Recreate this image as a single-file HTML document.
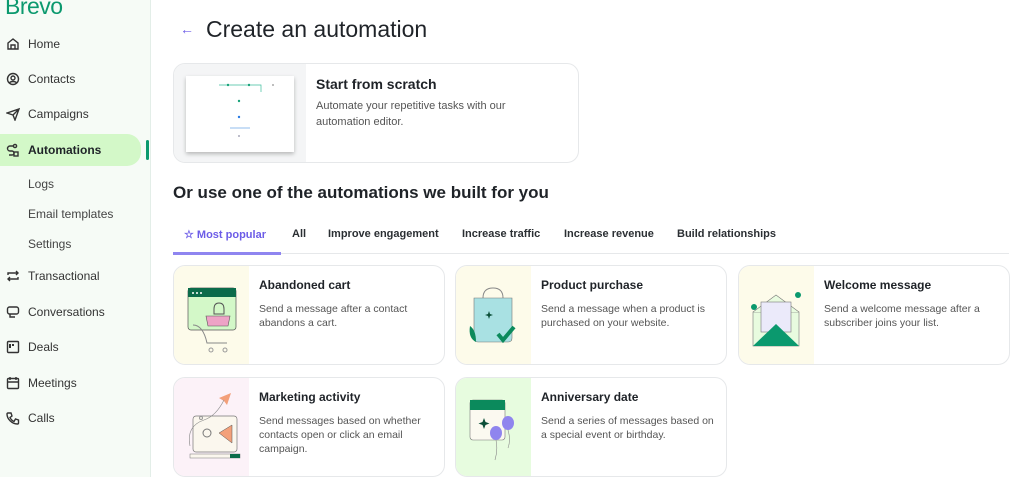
<!DOCTYPE html>
<html><head><meta charset="utf-8"><style>
*{box-sizing:border-box;margin:0;padding:0}
body{width:1024px;height:477px;overflow:hidden;font-family:"Liberation Sans",sans-serif;background:#fff;color:#1f2328;position:relative}
.sb{position:absolute;left:0;top:0;width:151px;height:477px;background:#f6fbf6;border-right:1px solid #e3eee8}
.logo{position:absolute;left:5px;top:-7px;font-size:23px;color:#0b996e;letter-spacing:-0.5px}
.nav{position:absolute;left:0;width:141px;height:32px;display:flex;align-items:center;font-size:12px;color:#333}
.nav svg{position:absolute;left:6px;width:14px;height:14px}
.nav span{position:absolute;left:28px}
.act{background:#d3f8c8;border-radius:0 14px 14px 0;font-weight:bold;color:#1f2328}
.bar{position:absolute;left:146px;top:140px;width:3px;height:20px;background:#0b996e;border-radius:2px}
.sub{position:absolute;left:28px;font-size:12px;color:#444}
.h1{position:absolute;left:206px;top:16px;font-size:23px;color:#1f2328}
.back{position:absolute;left:180px;top:21px;color:#6c5ce7;font-size:14px;font-weight:bold}
.card{position:absolute;border:1px solid #e6e8ea;border-radius:12px;overflow:hidden;background:#fff}
.card .img{position:absolute;left:0;top:0;bottom:0;width:75px}
.card h3{position:absolute;left:85px;top:12px;font-size:12px;font-weight:bold;color:#1f2328}
.card p{position:absolute;left:85px;top:36px;font-size:10.5px;line-height:14px;color:#555;width:180px}
.h2{position:absolute;left:173px;top:183px;font-size:17px;font-weight:bold;color:#1f2328}
.tab{position:absolute;top:228px;font-size:11px;font-weight:bold;color:#2b2f33}
</style></head><body>
<div class="sb">
<div class="logo">Brevo</div>
<div class="nav" style="top:28px"><svg viewBox="0 0 14 14" fill="none" stroke="#333" stroke-width="1.4"><path d="M2 6L7 2l5 4v6H2z M5 12V8h4v4"/></svg><span>Home</span></div>
<div class="nav" style="top:63px"><svg viewBox="0 0 14 14" fill="none" stroke="#333" stroke-width="1.4"><circle cx="7" cy="7" r="5.5"/><circle cx="7" cy="6" r="2"/><path d="M3.5 11c1-2 6-2 7 0"/></svg><span>Contacts</span></div>
<div class="nav" style="top:98px"><svg viewBox="0 0 14 14" fill="none" stroke="#333" stroke-width="1.4"><path d="M1 6l12-4-4 11-2-5z M7 8l6-6"/></svg><span>Campaigns</span></div>
<div class="nav act" style="top:134px"><svg viewBox="0 0 14 14" fill="none" stroke="#333" stroke-width="1.4"><circle cx="9" cy="3" r="1.6"/><rect x="8" y="9" width="4" height="4"/><path d="M7 3H4a2 2 0 0 0 0 5h2a2 2 0 0 1 0 4H3"/></svg><span>Automations</span></div>
<div class="bar"></div>
<div class="sub" style="top:177px">Logs</div>
<div class="sub" style="top:207px">Email templates</div>
<div class="sub" style="top:237px">Settings</div>
<div class="nav" style="top:260px"><svg viewBox="0 0 14 14" fill="none" stroke="#333" stroke-width="1.4"><path d="M2 6V4h10M10 2l2 2-2 2M12 8v2H2M4 12l-2-2 2-2"/></svg><span>Transactional</span></div>
<div class="nav" style="top:296px"><svg viewBox="0 0 14 14" fill="none" stroke="#333" stroke-width="1.4"><rect x="1.5" y="2" width="11" height="7" rx="2"/><path d="M4 9v3h5"/></svg><span>Conversations</span></div>
<div class="nav" style="top:331px"><svg viewBox="0 0 14 14" fill="none" stroke="#333" stroke-width="1.4"><rect x="1.5" y="1.5" width="11" height="11" rx="1"/><path d="M4 4v4M7 4v2" stroke-width="2"/></svg><span>Deals</span></div>
<div class="nav" style="top:367px"><svg viewBox="0 0 14 14" fill="none" stroke="#333" stroke-width="1.4"><rect x="1.5" y="2.5" width="11" height="10" rx="1"/><path d="M1.5 6h11M4 1v3M10 1v3"/></svg><span>Meetings</span></div>
<div class="nav" style="top:402px"><svg viewBox="0 0 14 14" fill="none" stroke="#333" stroke-width="1.4"><path d="M2 2h3l1 3-2 1.5a8 8 0 0 0 4 4L9.5 8l3 1v3a1 1 0 0 1-1 1C6 13 1 8 1 3a1 1 0 0 1 1-1z"/></svg><span>Calls</span></div>
</div>

<div class="back">&larr;</div>
<div class="h1">Create an automation</div>

<div class="card" style="left:173px;top:63px;width:406px;height:100px">
<div style="position:absolute;left:0;top:0;bottom:0;width:132px;background:#f4f5f6"></div>
<div style="position:absolute;left:12px;top:12px;width:108px;height:76px;background:#fff;box-shadow:0 2px 4px rgba(0,0,0,.25)">
<svg width="108" height="76" viewBox="0 0 108 76"><path d="M33 9h42v7" stroke="#3cbf9d" fill="none" stroke-width=".7"/><circle cx="42" cy="9" r="1.2" fill="#1aa37a"/><circle cx="63" cy="9" r="1.2" fill="#1aa37a"/><circle cx="87" cy="9" r="1" fill="#aaa"/><circle cx="53" cy="25" r="1.2" fill="#1aa37a"/><circle cx="53" cy="41" r="1.2" fill="#2a7be4"/><path d="M44 52h20" stroke="#6ea8e8" stroke-width=".8"/><circle cx="53" cy="60" r="1" fill="#aab"/></svg></div>
<div style="position:absolute;left:142px;top:12px;font-size:14px;font-weight:bold">Start from scratch</div>
<div style="position:absolute;left:142px;top:34px;font-size:11px;line-height:16px;color:#555;width:220px">Automate your repetitive tasks with our automation editor.</div>
</div>

<div class="h2">Or use one of the automations we built for you</div>
<div class="tab" style="left:184px;color:#6c5ce7">☆ Most popular</div>
<div class="tab" style="left:292px">All</div>
<div class="tab" style="left:328px">Improve engagement</div>
<div class="tab" style="left:462px">Increase traffic</div>
<div class="tab" style="left:564px">Increase revenue</div>
<div class="tab" style="left:677px">Build relationships</div>
<div style="position:absolute;left:173px;top:253px;width:836px;height:1px;background:#e6e8ea"></div>
<div style="position:absolute;left:173px;top:252px;width:108px;height:3px;background:#8f85f0"></div>

<div class="card" style="left:173px;top:265px;width:272px;height:100px"><div class="img" style="background:#fdfbea">
<svg width="75" height="100" viewBox="0 0 75 100"><rect x="14" y="22" width="48" height="42" rx="3" fill="#d3f8c8" stroke="#555" stroke-width=".7"/><rect x="14" y="22" width="48" height="9" fill="#0b6b4a"/><circle cx="19" cy="27" r="1" fill="#fff"/><circle cx="23" cy="27" r="1" fill="#fff"/><circle cx="27" cy="27" r="1" fill="#fff"/><path d="M40 43q0-6 5-6t5 6v5h-10z" fill="none" stroke="#555"/><path d="M32 50h24l-2 10H34z" fill="#eea3c6" stroke="#555" stroke-width=".6"/><circle cx="37" cy="84" r="2" fill="none" stroke="#999"/><circle cx="51" cy="84" r="2" fill="none" stroke="#999"/><path d="M19 59q10 0 14 18h20" fill="none" stroke="#888"/></svg></div>
<h3>Abandoned cart</h3><p>Send a message after a contact abandons a cart.</p></div>

<div class="card" style="left:455px;top:265px;width:272px;height:100px"><div class="img" style="background:#fdfbea">
<svg width="75" height="100" viewBox="0 0 75 100"><path d="M27 32q0-10 10-10t10 10" fill="none" stroke="#888"/><path d="M18 32h38v40q0 4-4 4H22q-4 0-4-4z" fill="#a9e1e3" stroke="#777" stroke-width=".6"/><path d="M42 68l5 6 11-13" stroke="#0b8a5c" stroke-width="4" fill="none"/><path d="M14 60q6 4 6 16q-8-4-6-16z" fill="#0b8a5c"/><path d="M33 45l1 3 3 1-3 1-1 3-1-3-3-1 3-1z" fill="#0b4f38"/></svg></div>
<h3>Product purchase</h3><p>Send a message when a product is purchased on your website.</p></div>

<div class="card" style="left:738px;top:265px;width:272px;height:100px"><div class="img" style="background:#fdfbea">
<svg width="75" height="100" viewBox="0 0 75 100"><rect x="14" y="46" width="46" height="34" fill="#e8fbdf" stroke="#777" stroke-width=".6"/><path d="M14 46l23-17 23 17" fill="#e8fbdf" stroke="#777" stroke-width=".6"/><rect x="22" y="36" width="30" height="30" fill="#ebeafa" stroke="#777" stroke-width=".6"/><path d="M14 80l23-22 23 22z" fill="#0b996e"/><circle cx="15" cy="41" r="3" fill="#0b996e"/><circle cx="59" cy="29" r="3" fill="#0b996e"/></svg></div>
<h3>Welcome message</h3><p>Send a welcome message after a subscriber joins your list.</p></div>

<div class="card" style="left:173px;top:377px;width:272px;height:100px"><div class="img" style="background:#fcf2f8">
<svg width="75" height="100" viewBox="0 0 75 100"><rect x="19" y="38" width="44" height="36" rx="3" fill="#fbf7ee" stroke="#777" stroke-width=".7"/><rect x="16" y="76" width="50" height="4" fill="#fbf7ee" stroke="#777" stroke-width=".5"/><rect x="56" y="76" width="10" height="4" fill="#0b6b4a"/><path d="M45 55l13-8v18z" fill="#f3a07a" stroke="#555" stroke-width=".5"/><circle cx="33" cy="55" r="4" fill="none" stroke="#777"/><path d="M45 20l12-5-4 12-3-4z" fill="#f3a07a"/><path d="M16 68q-4-20 14-26q12-4 20-20" fill="none" stroke="#888" stroke-width=".6"/><circle cx="27" cy="40" r="1.5" fill="none" stroke="#999"/></svg></div>
<h3>Marketing activity</h3><p>Send messages based on whether contacts open or click an email campaign.</p></div>

<div class="card" style="left:455px;top:377px;width:272px;height:100px"><div class="img" style="background:#e7fcdf">
<svg width="75" height="100" viewBox="0 0 75 100"><rect x="14" y="22" width="35" height="40" rx="3" fill="#fbf9f0" stroke="#777" stroke-width=".6"/><rect x="14" y="22" width="35" height="10" fill="#0b8a5c"/><path d="M28 40l1.5 4 4 1.5-4 1.5-1.5 4-1.5-4-4-1.5 4-1.5z" fill="#0b4f38"/><ellipse cx="52" cy="45" rx="6" ry="7" fill="#8f85ee"/><ellipse cx="40" cy="55" rx="6" ry="7" fill="#8f85ee"/><path d="M40 62q2 10-1 20M52 52q3 10 0 18" stroke="#888" fill="none" stroke-width=".6"/></svg></div>
<h3>Anniversary date</h3><p>Send a series of messages based on a special event or birthday.</p></div>
</body></html>
